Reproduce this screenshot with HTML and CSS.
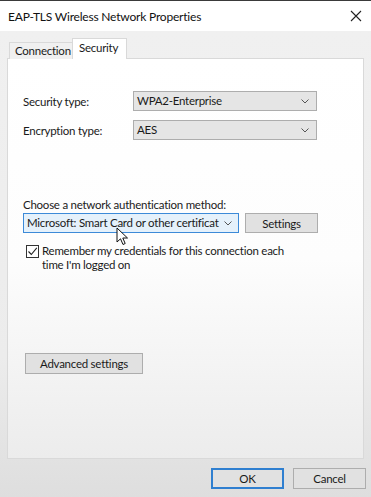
FILE: index.html
```html
<!DOCTYPE html>
<html>
<head>
  <meta charset="utf-8">
  <title>EAP-TLS Wireless Network Properties</title>
  <link rel="stylesheet" href="styles.css">
</head>
<body>
  <div class="window">
    <div class="titlebar">
      <span class="title">EAP-TLS Wireless Network Properties</span>
      <svg class="close" width="12" height="12" viewBox="0 0 12 12">
        <path d="M1 1 L11 11 M11 1 L1 11" stroke="#222" stroke-width="1.1" fill="none"/>
      </svg>
    </div>

    <div class="dialog">
      <div class="tabs">
        <div class="tab">Connection</div>
        <div class="tab active">Security</div>
      </div>

      <div class="panel">
        <div class="field">
          <span class="label">Security type:</span>
          <div class="select">
            <span>WPA2-Enterprise</span>
            <svg class="chev" width="8" height="5" viewBox="0 0 8 5"><path d="M0.5 0.5 L4 4 L7.5 0.5" stroke="#555" fill="none"/></svg>
          </div>
        </div>
        <div class="field">
          <span class="label">Encryption type:</span>
          <div class="select">
            <span>AES</span>
            <svg class="chev" width="8" height="5" viewBox="0 0 8 5"><path d="M0.5 0.5 L4 4 L7.5 0.5" stroke="#555" fill="none"/></svg>
          </div>
        </div>

        <div class="auth-label">Choose a network authentication method:</div>
        <div class="auth-row">
          <div class="select focused">
            <span>Microsoft: Smart Card or other certificat</span>
            <svg class="chev" width="8" height="5" viewBox="0 0 8 5"><path d="M0.5 0.5 L4 4 L7.5 0.5" stroke="#555" fill="none"/></svg>
          </div>
          <button class="btn settings">Settings</button>
          <svg class="cursor" width="14" height="20" viewBox="0 0 14 20">
            <path d="M1 1 L1 15 L4.5 11.8 L7 17.5 L9.2 16.5 L6.8 11 L11.5 11 Z" fill="#fff" stroke="#111" stroke-width="1" stroke-linejoin="round"/>
          </svg>
        </div>

        <label class="check-row">
          <span class="checkbox">
            <svg width="11" height="11" viewBox="0 0 11 11"><path d="M1.5 5.5 L4.3 8.5 L9.8 1.8" stroke="#222" stroke-width="1.1" fill="none"/></svg>
          </span>
          <span class="check-text">Remember my credentials for this connection each<br>time I'm logged on</span>
        </label>

        <button class="btn advanced">Advanced settings</button>
      </div>

      <div class="footer">
        <button class="btn default">OK</button>
        <button class="btn">Cancel</button>
      </div>
    </div>
  </div>
</body>
</html>
```

FILE: styles.css
```css
* {
  margin: 0;
  padding: 0;
  box-sizing: border-box;
}

body {
  width: 371px;
  height: 497px;
  overflow: hidden;
  font-family: Lato, "Liberation Sans", sans-serif;
  font-size: 11.5px;
  letter-spacing: -0.25px;
  color: #1a1a1a;
  background: #e4e4e4;
}

.window {
  height: 497px;
  display: flex;
  flex-direction: column;
  border-top: 1px solid #3a3a3a;
}

.titlebar {
  height: 30px;
  background: #fff;
  display: flex;
  align-items: center;
  justify-content: space-between;
  padding: 0 8px 0 8px;
}

.title {
  font-size: 12px;
  letter-spacing: -0.2px;
  color: #111;
}

.close {
  margin-right: 1px;
}

.dialog {
  flex: 1;
  display: flex;
  flex-direction: column;
  padding: 7px 7px 0 7px;
  background: linear-gradient(#f0f0f0 0%, #ececec 70%, #dedede 100%);
}

/* tabs */
.tabs {
  display: flex;
  align-items: flex-end;
  height: 21px;
  padding-left: 2px;
  margin-bottom: -1px;
  position: relative;
  z-index: 1;
}

.tab {
  height: 17px;
  width: 64px;
  padding: 0 0 0 5px;
  border: 1px solid #d9d9d9;
  border-bottom: none;
  background: #f0f0f0;
  line-height: 15px;
  white-space: nowrap;
}

.tab.active {
  height: 21px;
  width: 55px;
  margin-left: -1px;
  padding: 0 0 0 6px;
  background: #fff;
  line-height: 17px;
}

/* panel */
.panel {
  height: 401px;
  border: 1px solid #d9d9d9;
  background: linear-gradient(#fff 0%, #fdfdfd 50%, #ececec 100%);
  padding: 32px 0 0 15px;
  display: flex;
  flex-direction: column;
  align-items: flex-start;
}

.field {
  display: flex;
  align-items: center;
  margin-bottom: 9px;
}

.label {
  width: 110px;
}

.select {
  width: 184px;
  height: 20px;
  border: 1px solid #adadad;
  background: #e5e5e5;
  display: flex;
  align-items: center;
  justify-content: space-between;
  padding: 0 7px 0 3px;
  line-height: 18px;
  white-space: nowrap;
}

.select.focused {
  width: 216px;
  border-color: #3c8ad8;
  background: #e5f1fb;
  padding-right: 6px;
}

.auth-label {
  margin-top: 47px;
  height: 17px;
  line-height: 17px;
}

.auth-row {
  display: flex;
  gap: 6px;
  position: relative;
}

.cursor {
  position: absolute;
  left: 93px;
  top: 14px;
}

.btn {
  height: 21px;
  border: 1px solid #adadad;
  background: #e1e1e1;
  font-family: inherit;
  font-size: 11.5px;
  letter-spacing: -0.25px;
  color: #1a1a1a;
}

.settings {
  width: 73px;
  height: 20px;
}

.check-row {
  display: flex;
  gap: 3px;
  margin-top: 11px;
  margin-left: 3px;
  line-height: 14px;
}

.checkbox {
  width: 13px;
  height: 13px;
  margin-top: 1px;
  border: 1px solid #333;
  background: #fff;
  display: flex;
  align-items: center;
  justify-content: center;
}

.advanced {
  margin-top: 81px;
  margin-left: 2px;
  width: 118px;
}

/* footer */
.footer {
  display: flex;
  justify-content: flex-end;
  gap: 9px;
  padding: 9px 0 0 0;
  margin-right: -2px;
}

.footer .btn {
  width: 73px;
  height: 21px;
}

.btn.default {
  border: 2px solid #2f7fd0;
}
```
